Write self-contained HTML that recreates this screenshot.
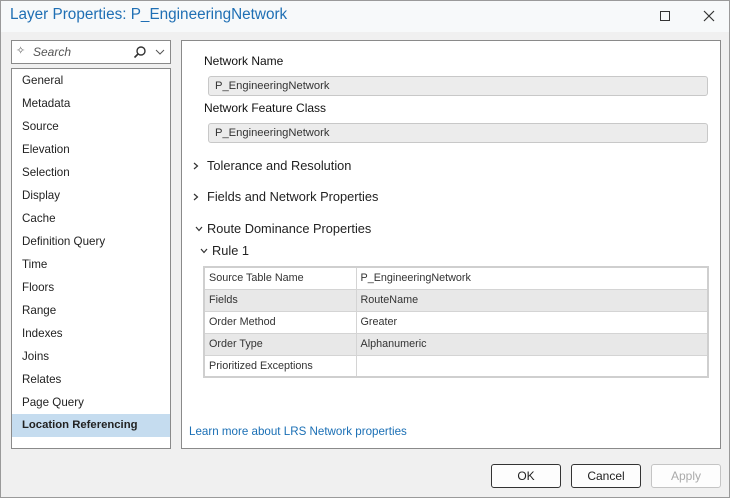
<!DOCTYPE html>
<html><head><style>
*{margin:0;padding:0;box-sizing:border-box}
body{width:730px;height:498px;background:#f0f0f0;font-family:"Liberation Sans",sans-serif;font-size:12px;color:#222;position:relative;overflow:hidden}
#frame{position:absolute;left:0;top:0;width:730px;height:498px;border:1px solid #9a9a9a;pointer-events:none}
.abs{position:absolute}
#title{left:0;top:0;width:730px;height:32px;background:#f7f9fa}
#title span{position:absolute;left:10px;top:6px;font-size:15.3px;color:#1f6fb4}
#search{left:11px;top:40px;width:160px;height:24px;border:1px solid #8a8a8a;background:#fff}
#list{left:11px;top:68px;width:160px;height:381px;border:1px solid #8a8a8a;background:#fff}
.it{position:absolute;left:0;width:158px;height:23px;line-height:23px;padding-left:10px;font-size:11.6px;color:#222}
.sel{background:#c5dcef;font-weight:bold;font-size:11.3px}
#panel{left:181px;top:40px;width:540px;height:409px;border:1px solid #8a8a8a;background:#fff}
.lbl{position:absolute;font-size:12px;color:#111}
.fld{position:absolute;left:26px;width:500px;height:20px;border:1px solid #c8c8c8;background:#ececec;border-radius:3px;font-size:11.2px;line-height:18px;padding-left:6px;color:#333}
.hd{position:absolute;font-size:12.8px;color:#222}
.hd svg{position:absolute}
table{position:absolute;left:21px;top:225px;width:506px;border-collapse:collapse;border:2px solid #cfcfcf}
td{height:22px;border:1px solid #d4d4d4;font-size:10.8px;padding-left:4px;color:#333}
tr:nth-child(even) td{background:#e8e8e8}
.btn{position:absolute;top:464px;width:70px;height:24px;border:1px solid #333;border-radius:3px;background:#fdfdfd;text-align:center;line-height:22px;font-size:12px}
</style></head><body>
<div id="title" class="abs"><span>Layer Properties: P_EngineeringNetwork</span>
<svg class="abs" style="left:659px;top:10px" width="12" height="12"><rect x="1.5" y="1.5" width="9" height="9" fill="none" stroke="#333"/></svg>
<svg class="abs" style="left:703px;top:10px" width="12" height="12"><path d="M1 1L11 11M11 1L1 11" stroke="#333" stroke-width="1.2"/></svg>
</div>
<div id="search" class="abs">
<span class="abs" style="left:4px;top:3px;font-size:11px;color:#666">✧</span>
<span class="abs" style="left:21px;top:4px;font-style:italic;color:#555;font-size:12px">Search</span>
<svg class="abs" style="left:121px;top:4px" width="14" height="14"><circle cx="8" cy="6" r="4" fill="none" stroke="#333" stroke-width="1.4"/><path d="M5 9L1.5 12.5" stroke="#333" stroke-width="1.6"/></svg>
<svg class="abs" style="left:143px;top:8px" width="10" height="6"><path d="M1 1L5 5L9 1" fill="none" stroke="#555"/></svg>
</div>
<div id="list" class="abs">
<div class="it" style="top:0px">General</div>
<div class="it" style="top:23px">Metadata</div>
<div class="it" style="top:46px">Source</div>
<div class="it" style="top:69px">Elevation</div>
<div class="it" style="top:92px">Selection</div>
<div class="it" style="top:115px">Display</div>
<div class="it" style="top:138px">Cache</div>
<div class="it" style="top:161px">Definition Query</div>
<div class="it" style="top:184px">Time</div>
<div class="it" style="top:207px">Floors</div>
<div class="it" style="top:230px">Range</div>
<div class="it" style="top:253px">Indexes</div>
<div class="it" style="top:276px">Joins</div>
<div class="it" style="top:299px">Relates</div>
<div class="it" style="top:322px">Page Query</div>
<div class="it sel" style="top:345px">Location Referencing</div>
</div>
<div id="panel" class="abs">
<div class="lbl" style="left:22px;top:13px">Network Name</div>
<div class="fld" style="top:35px">P_EngineeringNetwork</div>
<div class="lbl" style="left:22px;top:60px">Network Feature Class</div>
<div class="fld" style="top:82px">P_EngineeringNetwork</div>
<div class="hd" style="left:25px;top:117px"><svg style="left:-14px;top:4px" width="6" height="8"><path d="M1 1L4.5 4L1 7" fill="none" stroke="#333" stroke-width="1.2"/></svg>Tolerance and Resolution</div>
<div class="hd" style="left:25px;top:148px"><svg style="left:-14px;top:4px" width="6" height="8"><path d="M1 1L4.5 4L1 7" fill="none" stroke="#333" stroke-width="1.2"/></svg>Fields and Network Properties</div>
<div class="hd" style="left:25px;top:180px"><svg style="left:-12px;top:5px" width="8" height="6"><path d="M1 1L4 4.5L7 1" fill="none" stroke="#333" stroke-width="1.2"/></svg>Route Dominance Properties</div>
<div class="hd" style="left:30px;top:202px"><svg style="left:-12px;top:5px" width="8" height="6"><path d="M1 1L4 4.5L7 1" fill="none" stroke="#333" stroke-width="1.2"/></svg>Rule 1</div>
<table>
<tr><td style="width:152px">Source Table Name</td><td>P_EngineeringNetwork</td></tr>
<tr><td>Fields</td><td>RouteName</td></tr>
<tr><td>Order Method</td><td>Greater</td></tr>
<tr><td>Order Type</td><td>Alphanumeric</td></tr>
<tr><td>Prioritized Exceptions</td><td></td></tr>
</table>
<div class="abs" style="left:7px;top:384px;color:#1a6fb5;font-size:11.6px">Learn more about LRS Network properties</div>
</div>
<div class="btn" style="left:491px">OK</div>
<div class="btn" style="left:571px">Cancel</div>
<div class="btn" style="left:651px;border-color:#c4c4c4;color:#aaa">Apply</div>
<div id="frame"></div>
</body></html>
